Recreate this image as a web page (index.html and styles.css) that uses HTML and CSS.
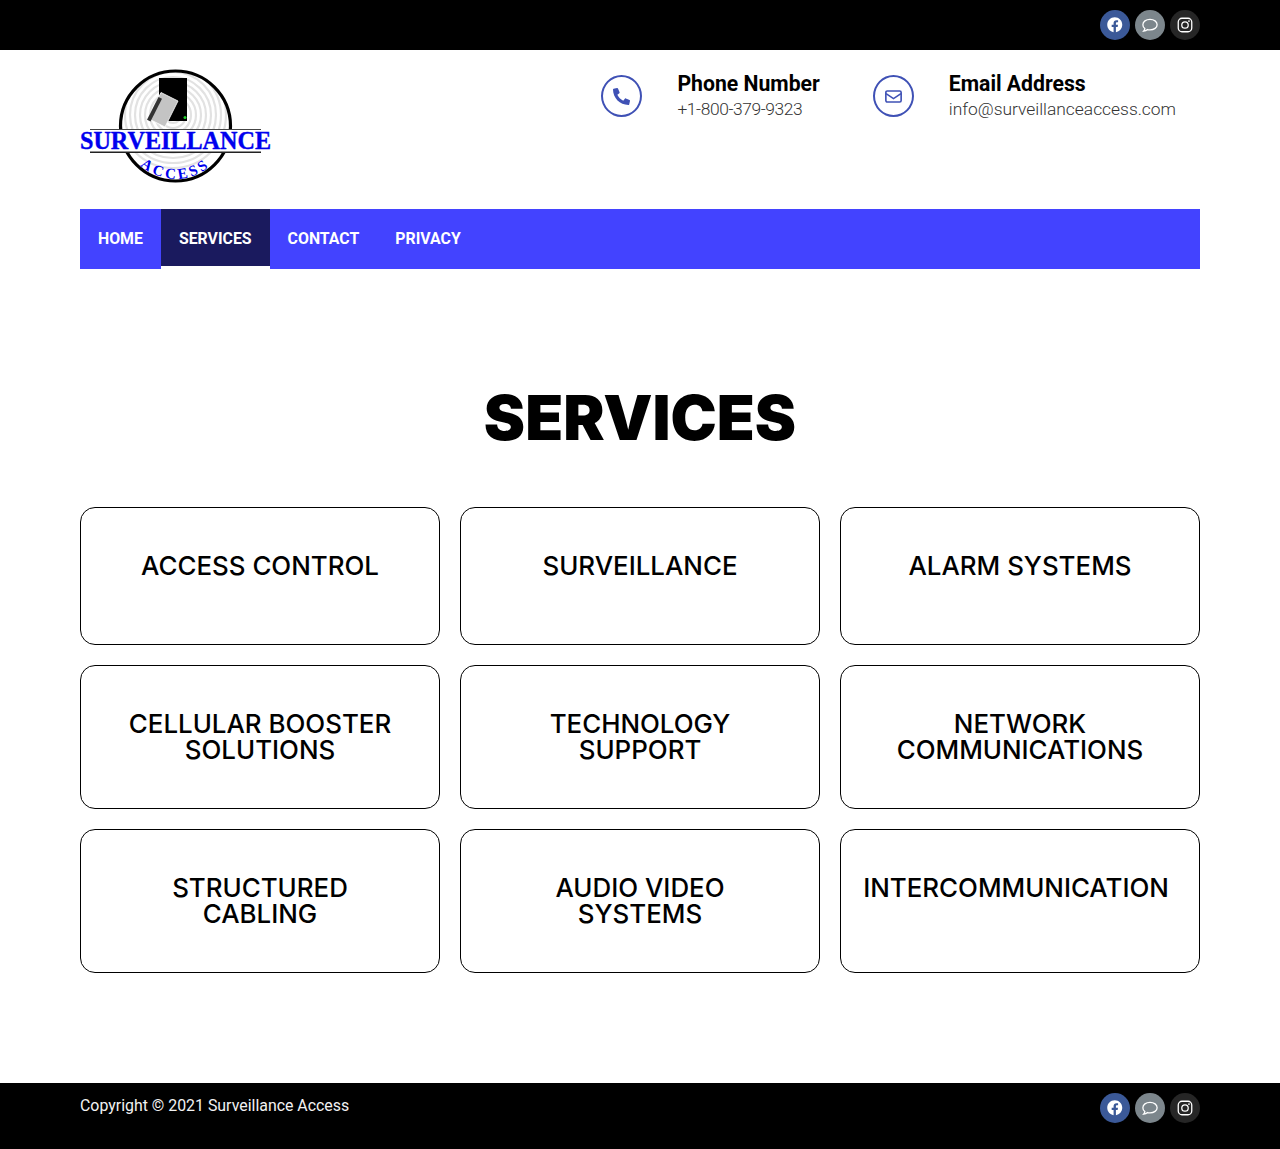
FILE: index.html
```html
<!DOCTYPE html>
<html lang="en">
<head>
<meta charset="utf-8">
<title>Services - Surveillance Access</title>
<link rel="stylesheet" href="styles.css">
</head>
<body>
<div class="topbar">
  <div class="wrap social-row">
    <a class="soc fb"><svg viewBox="0 0 512 512"><path d="M504 256C504 119 393 8 256 8S8 119 8 256c0 123.800 90.700 226.400 209.300 245V327.700h-63V256h63v-54.600c0-62.200 37-96.500 93.700-96.500 27.100 0 55.500 4.800 55.500 4.800v61h-31.300c-30.800 0-40.400 19.100-40.400 38.700V256h68.800l-11 71.700h-57.800V501C413.300 482.400 504 379.800 504 256z"/></svg></a>
    <a class="soc chat"><svg viewBox="0 0 24 24"><path class="ln" d="M12 4.500c5.400 0 9.500 3 9.500 7s-4.100 7-9.500 7c-1.200 0-2.300-.15-3.300-.45C7.300 19.300 5.400 20 3.500 20.300c.9-1.100 1.500-2.300 1.600-3.500C3.400 15.500 2.500 13.600 2.500 11.500c0-4 4.100-7 9.500-7z"/></svg></a>
    <a class="soc ig"><svg viewBox="0 0 24 24"><rect class="ln" x="3" y="3" width="18" height="18" rx="5"/><circle class="ln" cx="12" cy="12" r="4.300"/><circle cx="17.300" cy="6.700" r="1.200"/></svg></a>
  </div>
</div>

<header class="wrap header">
  <svg class="logo" viewBox="0 0 191 113">
    <defs>
      <clipPath id="disc"><circle cx="95.500" cy="56" r="55"/></clipPath>
    </defs>
    <circle cx="95.500" cy="56" r="55" fill="#fff"/>
    <g fill="none" stroke="#e2e2e2" stroke-width="2.200" clip-path="url(#disc)">
      <circle cx="93" cy="45" r="8"/><circle cx="93" cy="45" r="13"/><circle cx="93" cy="45" r="18"/><circle cx="93" cy="45" r="23"/><circle cx="93" cy="45" r="28"/><circle cx="93" cy="45" r="33"/><circle cx="93" cy="45" r="38"/><circle cx="93" cy="45" r="43"/><circle cx="93" cy="45" r="48"/><circle cx="93" cy="45" r="53"/>
    </g>
    <rect x="79" y="8" width="28" height="43" fill="#000"/>
    <circle cx="105" cy="47.500" r="1.500" fill="#1fd22a"/>
    <path d="M81 22.500L98 31L85 57L68 48.500z" fill="#c4c4c4" stroke="#fff" stroke-width=".8"/>
    <path d="M78.500 27L82 28.800L70.500 51.500L67 49.700z" fill="#333"/>
    <circle cx="95.500" cy="56" r="55" fill="none" stroke="#000" stroke-width="3.200"/>
    <rect x="0" y="60" width="191" height="22" fill="#fff"/>
    <rect x="10" y="59" width="171" height="1" fill="#444"/>
    <rect x="10" y="81.500" width="171" height="1.500" fill="#222"/>
    <text class="logo-main" x="95.500" y="79" text-anchor="middle" textLength="191" lengthAdjust="spacingAndGlyphs">SURVEILLANCE</text>
    <path id="logoArc" d="M49.400 82A53 53 0 0 0 141.600 82" fill="none"/>
    <text class="logo-sub"><textPath href="#logoArc" startOffset="50%" text-anchor="middle">ACCESS</textPath></text>
  </svg>
  <div class="contacts">
    <div class="contact phone">
      <span class="ring"><svg viewBox="0 0 512 512"><path d="M493.400 24.600l-104-24c-11.300-2.600-22.900 3.300-27.500 13.900l-48 112c-4.200 9.800-1.400 21.300 6.900 28l60.600 49.600c-36 76.700-98.900 140.500-177.200 177.200l-49.600-60.600c-6.800-8.300-18.200-11.100-28-6.900l-112 48C3.900 366.500-2 378.100.6 389.400l24 104C27.100 504.200 36.700 512 48 512c256.100 0 464-207.500 464-464 0-11.200-7.700-20.900-18.600-23.400z" transform="matrix(-1 0 0 1 512 0)"/></svg></span>
      <div class="ctext"><h4>Phone Number</h4><p class="tel">+1-800-379-9323</p></div>
    </div>
    <div class="contact email">
      <span class="ring"><svg class="env" viewBox="0 0 24 18"><rect class="ln2" x="1.200" y="1.200" width="21.600" height="15.600" rx="2"/><path class="ln2" d="M1.500 5l10.500 7L22.500 5"/></svg></span>
      <div class="ctext"><h4>Email Address</h4><p>info@surveillanceaccess.com</p></div>
    </div>
  </div>
</header>

<div class="wrap">
  <nav class="nav">
    <a>HOME</a>
    <a class="active">SERVICES</a>
    <a>CONTACT</a>
    <a>PRIVACY</a>
  </nav>
</div>

<main class="wrap main">
  <h1>SERVICES</h1>
  <div class="grid">
    <div class="card short"><h3>ACCESS CONTROL</h3></div>
    <div class="card short"><h3>SURVEILLANCE</h3></div>
    <div class="card short"><h3>ALARM SYSTEMS</h3></div>
    <div class="card"><h3>CELLULAR BOOSTER SOLUTIONS</h3></div>
    <div class="card"><h3>TECHNOLOGY<br>SUPPORT</h3></div>
    <div class="card"><h3>NETWORK COMMUNICATIONS</h3></div>
    <div class="card"><h3>STRUCTURED<br>CABLING</h3></div>
    <div class="card"><h3>AUDIO VIDEO<br>SYSTEMS</h3></div>
    <div class="card"><h3 class="nudge">INTERCOMMUNICATION</h3></div>
  </div>
</main>

<footer class="footer">
  <div class="wrap footer-row">
    <p>Copyright © 2021 Surveillance Access</p>
    <div class="social-row">
      <a class="soc fb"><svg viewBox="0 0 512 512"><path d="M504 256C504 119 393 8 256 8S8 119 8 256c0 123.800 90.700 226.400 209.300 245V327.700h-63V256h63v-54.600c0-62.200 37-96.500 93.700-96.500 27.100 0 55.500 4.800 55.500 4.800v61h-31.300c-30.800 0-40.400 19.100-40.400 38.700V256h68.800l-11 71.700h-57.800V501C413.300 482.400 504 379.800 504 256z"/></svg></a>
      <a class="soc chat"><svg viewBox="0 0 24 24"><path class="ln" d="M12 4.500c5.400 0 9.500 3 9.500 7s-4.100 7-9.500 7c-1.200 0-2.300-.15-3.300-.45C7.300 19.300 5.400 20 3.500 20.300c.9-1.100 1.500-2.300 1.600-3.500C3.400 15.500 2.500 13.600 2.500 11.500c0-4 4.100-7 9.500-7z"/></svg></a>
      <a class="soc ig"><svg viewBox="0 0 24 24"><rect class="ln" x="3" y="3" width="18" height="18" rx="5"/><circle class="ln" cx="12" cy="12" r="4.300"/><circle cx="17.300" cy="6.700" r="1.200"/></svg></a>
    </div>
  </div>
</footer>
</body>
</html>
```
FILE: styles.css
```css
* { box-sizing: border-box; }
html, body { margin: 0; padding: 0; }
body { background: #fff; color: #000; font-family: Roboto, "Liberation Sans", sans-serif; }
.wrap { width: 1120px; margin: 0 auto; }

.topbar { background: #000; height: 50px; padding-top: 10px; }
.social-row { display: flex; justify-content: flex-end; gap: 5px; }
.soc { width: 30px; height: 30px; border-radius: 50%; display: flex; align-items: center; justify-content: center; }
.soc svg { width: 18px; height: 18px; fill: #fff; }
.soc.fb svg { width: 15.500px; height: 15.500px; }
.soc .ln { fill: none; stroke: #fff; stroke-width: 1.700; }
.fb { background: #3b5998; }
.chat { background: #7c868c; }
.ig { background: #262626; }

.header { display: flex; justify-content: space-between; height: 159px; padding-top: 20px; }
.logo { width: 191px; height: 113px; display: block; overflow: visible; }
.logo-main { font-family: "Liberation Serif", serif; font-weight: 700; font-size: 26px; fill: #0000ee; stroke: #0000ee; stroke-width: .4px; }
.logo-sub { font-family: "Liberation Serif", serif; font-weight: 700; font-size: 15px; letter-spacing: 3px; fill: #0000ee; }

.contacts { display: flex; padding-right: 24px; }
.contact { display: flex; align-items: flex-start; }
.phone { margin-right: 53px; }
.ring { width: 41px; height: 42px; margin-top: 5px; margin-right: 35px; border: 2px solid #3f51b5; border-radius: 50%; display: flex; align-items: center; justify-content: center; }
.ring svg { width: 17px; height: 17px; fill: #3f51b5; }
.ring svg.env { height: 13px; }
.ring .ln2 { fill: none; stroke: #3f51b5; stroke-width: 2.300; }
.ctext h4 { margin: 1px 0 0; font-size: 21.200px; line-height: 25px; font-weight: 700; color: #000; }
.ctext p { margin: 0; font-size: 17.400px; line-height: 26px; font-weight: 300; color: #333; }
.ctext p.tel { letter-spacing: -.4px; }

.nav { display: flex; height: 60px; background: #4343ff; }
.nav a { padding: 0 18px; line-height: 59px; font-size: 15.850px; font-weight: 700; color: #fff; }
.nav a.active { height: 57px; background: #1a1a5e; box-shadow: 0 3px 0 #fff; }

.main { padding-top: 109px; padding-bottom: 110px; }
h1 { margin: 0 0 49px; text-align: center; font-family: Inter, Lato, sans-serif; font-weight: 900; font-size: 62px; line-height: 80px; color: #000; }
.grid { display: grid; grid-template-columns: repeat(3, 360px); gap: 20px; }
.card { height: 144px; border: 1px solid #000; border-radius: 15px; padding: 45px 20px 0; text-align: center; }
.card.short { height: 138px; }
.card h3 { margin: 0; font-family: Inter, Lato, sans-serif; font-weight: 500; font-size: 25.900px; line-height: 26px; color: #000; }
.card h3.nudge { margin-left: -8px; }

.footer { background: #000; height: 66px; padding-top: 10px; color: #fff; }
.footer-row { display: flex; justify-content: space-between; }
.footer p { margin: 3px 0 0; font-size: 15.900px; line-height: 20px; color: #f2f2f2; }
```
